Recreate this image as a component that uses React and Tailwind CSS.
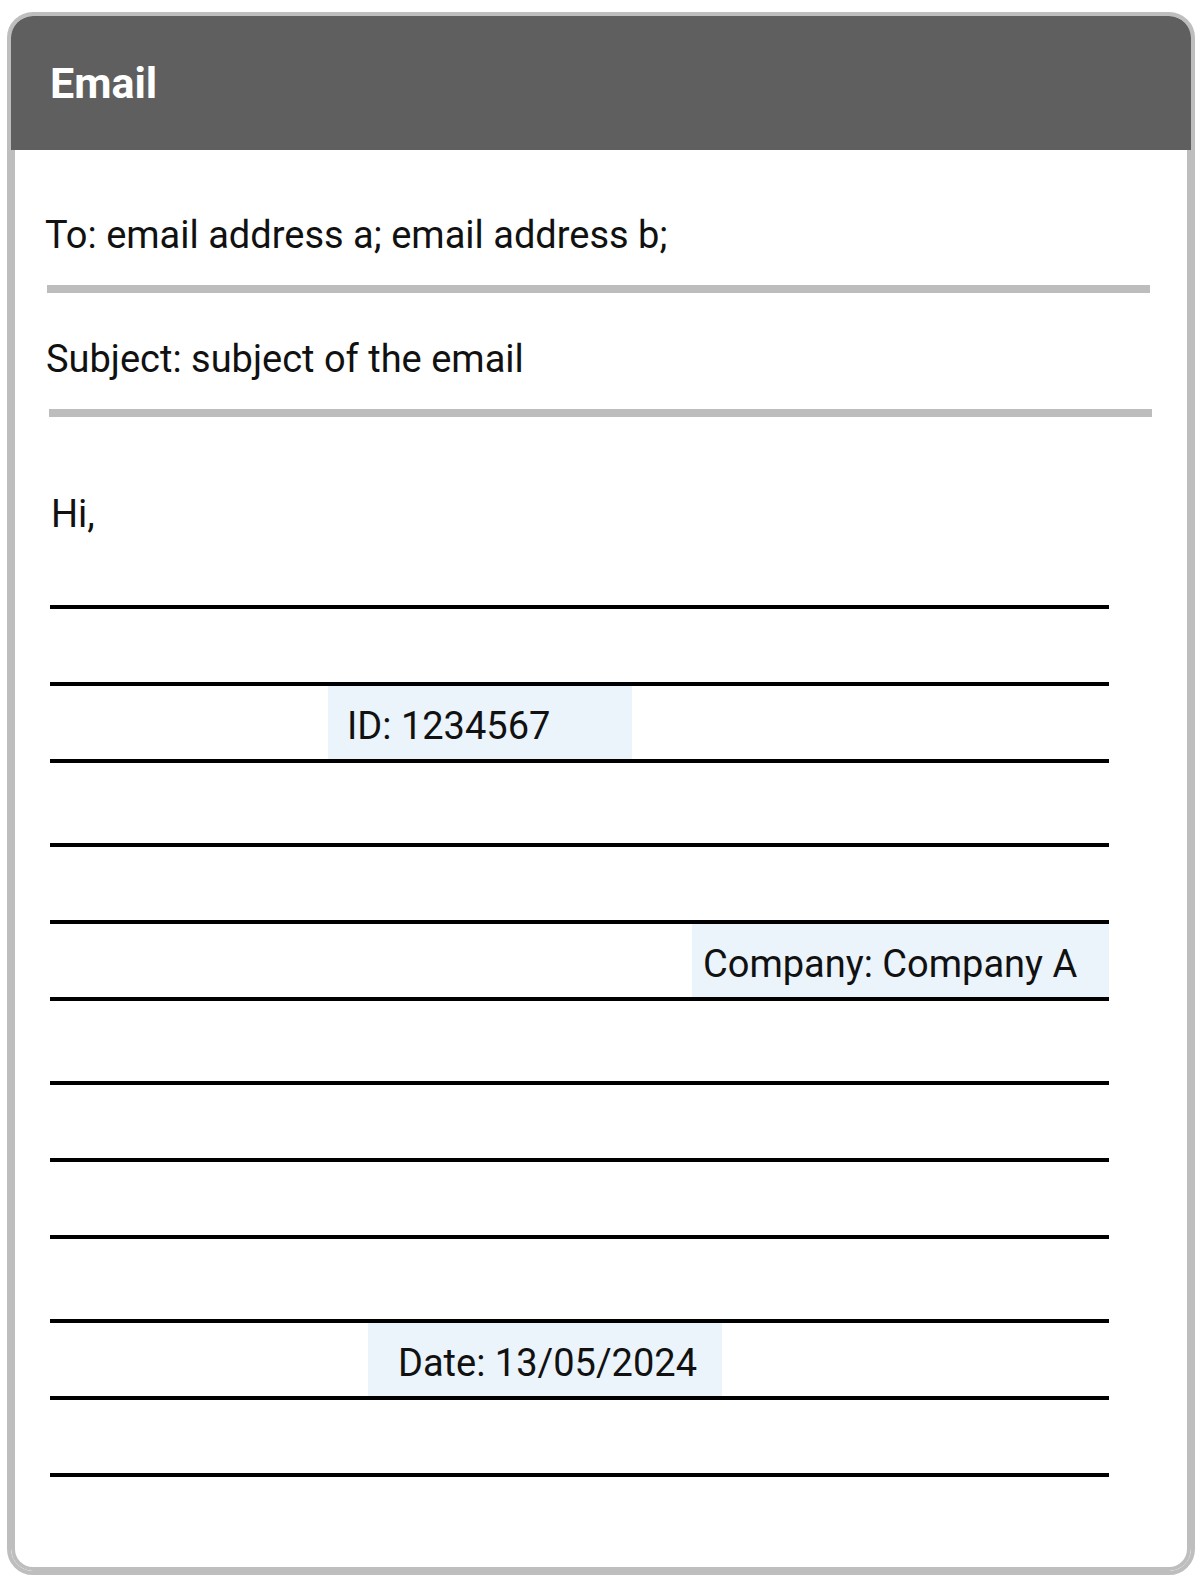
const rows = [
  { h: 'h-[72px]' },
  { h: 'h-[77px]' },
  { h: 'h-[77px]', box: { text: 'ID: 1234567', cls: 'ml-[278px] w-[304px] pl-[19px]' } },
  { h: 'h-[84px]' },
  { h: 'h-[77px]' },
  { h: 'h-[77px]', box: { text: 'Company: Company A', cls: 'ml-[642px] w-[417px] pl-[11px]' } },
  { h: 'h-[84px]' },
  { h: 'h-[77px]' },
  { h: 'h-[77px]' },
  { h: 'h-[84px]' },
  { h: 'h-[77px]', box: { text: 'Date: 13/05/2024', cls: 'ml-[318px] w-[354px] pl-[30px]' } },
  { h: 'h-[77px]' },
];

export default function App() {
  return (
    <div className="bg-white pt-[12px] pl-[7px] font-['Roboto',sans-serif] text-[#111]">
      <div className="w-[1188px] border-4 border-[#bebebe] rounded-[26px] overflow-hidden">
        <div className="h-[134px] bg-[#5f5f5f] flex items-center pl-[39px]">
          <span className="text-white font-bold text-[43px] leading-none">Email</span>
        </div>
        <div className="border-x-4 border-b-4 border-[#bebebe] rounded-b-[22px] bg-white pt-[62px] pb-[90px]">
          <div className="ml-[30px] text-[38px] leading-[46px]">
            To: email address a; email address b;
          </div>
          <div className="mt-[27px] ml-[32px] w-[1103px] h-[8px] bg-[#bdbdbd]" />
          <div className="mt-[43px] ml-[31px] text-[38px] leading-[46px]">
            Subject: subject of the email
          </div>
          <div className="mt-[27px] ml-[34px] w-[1103px] h-[8px] bg-[#bdbdbd]" />
          <div className="mt-[74px] ml-[36px] text-[38px] leading-[46px]">Hi,</div>
          <div className="ml-[35px] w-[1059px]">
            {rows.map((r, i) => (
              <div key={i} className={`${r.h} border-b-4 border-black flex`}>
                {r.box && (
                  <div className={`${r.box.cls} h-full pt-[6px] bg-[#ebf3fb] flex items-center text-[38px] leading-none`}>
                    {r.box.text}
                  </div>
                )}
              </div>
            ))}
          </div>
        </div>
      </div>
    </div>
  );
}
